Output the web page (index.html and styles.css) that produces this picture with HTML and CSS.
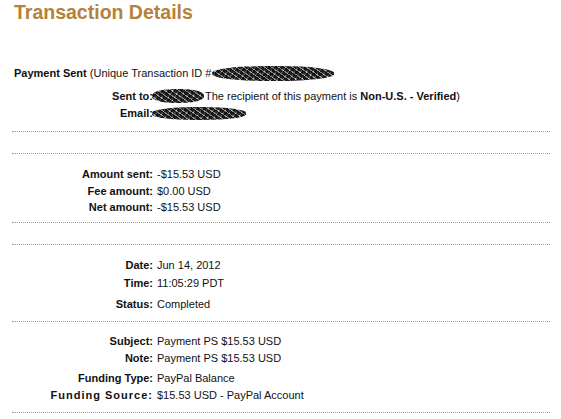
FILE: index.html
```html
<!DOCTYPE html>
<html>
<head>
<meta charset="utf-8">
<link rel="stylesheet" href="styles.css">
</head>
<body>
<div class="page">
  <h1 class="title">Transaction Details</h1>

  <div class="section head">
    <div class="summary"><b>Payment Sent</b> (Unique Transaction ID #<span class="redact redact-id"></span></div>
    <div class="field f-sent">
      <span class="label">Sent to:</span>
      <span class="value"><span class="redact redact-name"></span>The recipient of this payment is <b>Non-U.S. - Verified</b>)</span>
    </div>
    <div class="field f-email">
      <span class="label">Email:</span>
      <span class="value"><span class="redact redact-email"></span></span>
    </div>
  </div>
  <div class="rule"></div>
  <div class="section empty"></div>
  <div class="rule"></div>

  <div class="section s-amount">
    <div class="field"><span class="label">Amount sent:</span><span class="value">-$15.53 USD</span></div>
    <div class="field"><span class="label">Fee amount:</span><span class="value">$0.00 USD</span></div>
    <div class="field f-tight"><span class="label">Net amount:</span><span class="value">-$15.53 USD</span></div>
  </div>
  <div class="rule"></div>
  <div class="section empty"></div>
  <div class="rule"></div>

  <div class="section s-date">
    <div class="field"><span class="label">Date:</span><span class="value">Jun 14, 2012</span></div>
    <div class="field f-time"><span class="label">Time:</span><span class="value">11:05:29 PDT</span></div>
    <div class="field f-status"><span class="label">Status:</span><span class="value">Completed</span></div>
  </div>
  <div class="rule"></div>

  <div class="section s-subject">
    <div class="field"><span class="label">Subject:</span><span class="value">Payment PS $15.53 USD</span></div>
    <div class="field"><span class="label">Note:</span><span class="value">Payment PS $15.53 USD</span></div>
    <div class="field f-ftype"><span class="label">Funding Type:</span><span class="value">PayPal Balance</span></div>
    <div class="field"><span class="label label-wide">Funding Source:</span><span class="value">$15.53 USD - PayPal Account</span></div>
  </div>
  <div class="rule"></div>
</div>
</body>
</html>
```

FILE: styles.css
```css
html, body {
  margin: 0;
  padding: 0;
  background: #ffffff;
}

.page {
  font-family: "Liberation Sans", Arial, sans-serif;
  font-size: 11px;
  color: #111111;
  width: 561px;
}

.title {
  margin: 0;
  padding: 0 0 0 14px;
  height: 28px;
  font-size: 19.5px;
  line-height: 24px;
  font-weight: bold;
  color: #b5823a;
}

.section {
  display: flex;
  flex-direction: column;
}

.head {
  padding-top: 37px;
  padding-bottom: 10px;
}

.summary {
  padding-left: 14px;
  line-height: 16px;
  height: 16px;
  white-space: nowrap;
}

.field {
  display: grid;
  grid-template-columns: 139px auto;
  column-gap: 4px;
  padding-left: 14px;
  line-height: 16px;
  height: 16px;
  margin-top: 1px;
  white-space: nowrap;
}

.field:first-child {
  margin-top: 0;
}

.label {
  text-align: right;
  font-weight: bold;
}

.label-wide {
  letter-spacing: 1px;
}

.value {
  display: block;
}

.f-sent { margin-top: 7px; }
.f-email { margin-top: 1px; }

.f-tight { margin-top: 0; }
.f-time { margin-top: 2px; }
.f-status { margin-top: 5px; }
.f-ftype { margin-top: 4px; }

.rule {
  margin-left: 12px;
  width: 538px;
  border-top: 1px dotted #9a9a9a;
}

.empty { height: 21px; }

.s-amount {
  padding-top: 12px;
  padding-bottom: 7px;
}

.s-date {
  padding-top: 12px;
  padding-bottom: 9px;
}

.s-subject {
  padding-top: 11px;
  padding-bottom: 9px;
}

.redact {
  display: inline-block;
  vertical-align: middle;
  border-radius: 45%;
  background:
    repeating-linear-gradient(35deg, rgba(0,0,0,0.7) 0 1px, rgba(255,255,255,0.4) 1px 2px, rgba(0,0,0,0.5) 2px 4px),
    repeating-linear-gradient(-55deg, #2a2a2a 0 2px, #9a9a9a 2px 3px, #444 3px 5px);
}

.redact-id {
  width: 122px;
  height: 15px;
  margin-left: 1px;
  position: relative;
  top: -1px;
}

.redact-name {
  width: 52px;
  height: 14px;
  margin-left: -5px;
  margin-right: 1px;
  position: relative;
  top: -1px;
}

.redact-email {
  width: 94px;
  height: 13px;
  margin-left: -5px;
  position: relative;
  top: -1px;
}
```
